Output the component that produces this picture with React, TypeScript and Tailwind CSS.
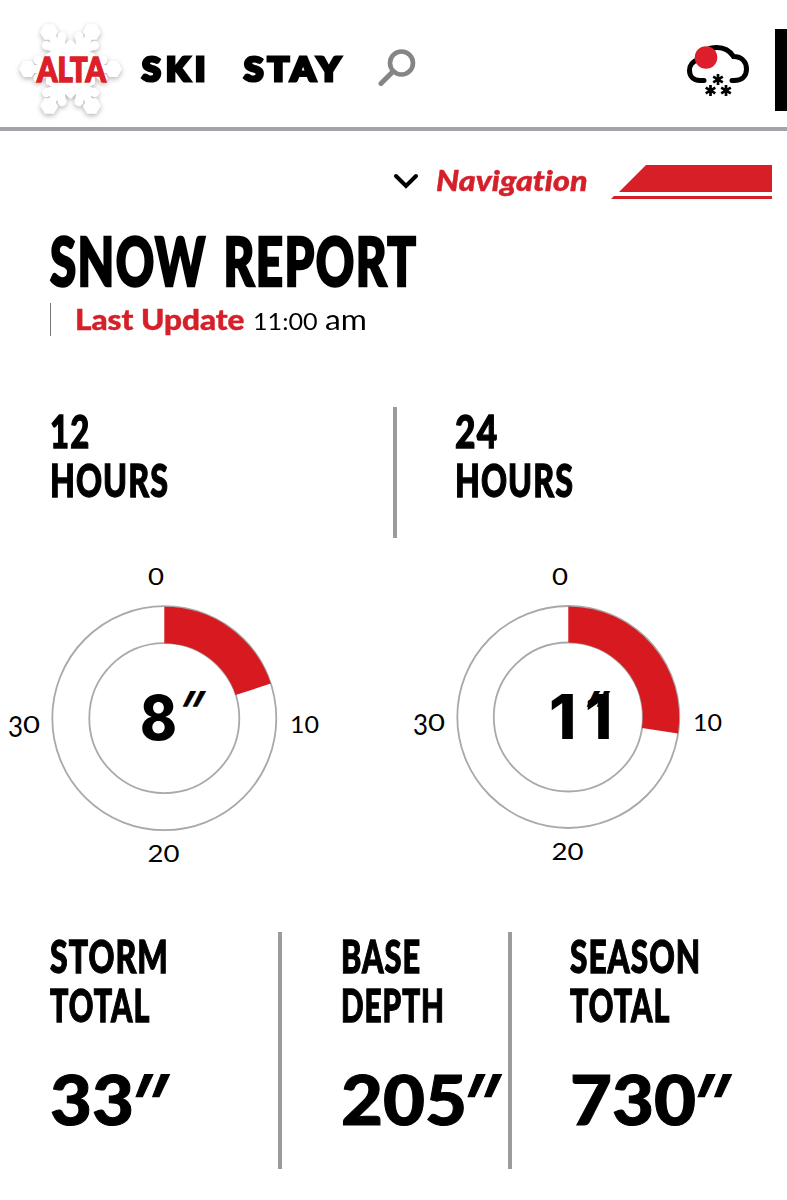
import { useLayoutEffect, useRef, useState } from "react";

type FitProps = { text: string; width: number; className?: string };

/* One line of display type, condensed or widened to a given width. */
function FitText({ text, width, className = "" }: FitProps) {
  const ref = useRef<HTMLSpanElement>(null);
  const [scale, setScale] = useState(1);
  useLayoutEffect(() => {
    if (ref.current) setScale(width / ref.current.offsetWidth);
  }, [width, text]);
  return (
    <span className="block" style={{ width }}>
      <span
        ref={ref}
        className={`inline-block origin-left whitespace-nowrap ${className}`}
        style={{ transform: `scaleX(${scale})` }}
      >
        {text}
      </span>
    </span>
  );
}

function Logo() {
  return (
    <svg viewBox="0 0 110 110" className="h-[110px] w-[110px] shrink-0 overflow-visible" aria-label="Alta">
      <g className="[filter:drop-shadow(0_2px_2.5px_rgba(0,0,0,0.28))]">
        <polygon points="55.5,25 63,32 80,40 80,70 63,78 55.5,85 48,78 31,70 31,40 48,32" fill="#fff" />
        {[0, 60, 120, 180, 240, 300].map((angle) => (
          <g key={angle} transform={`translate(55.5 55) rotate(${angle})`} fill="#fff" stroke="#fff">
            <path d="M0 0H40M21 0L32 -8.5M21 0L32 8.5" strokeWidth="8" fill="none" />
            <polygon points="51,0 46.8,7.5 38.7,7.5 34.5,0 38.7,-7.5 46.8,-7.5" strokeWidth="1" />
            <circle cx="32.5" cy="-9" r="4.6" strokeWidth="0" />
            <circle cx="32.5" cy="9" r="4.6" strokeWidth="0" />
          </g>
        ))}
      </g>
      <text
        x="22"
        y="67.5"
        textLength="69"
        lengthAdjust="spacingAndGlyphs"
        className="fill-[#dc1f2a] stroke-[#dc1f2a] font-['Lato',sans-serif] text-[34px] font-black"
        strokeWidth="1.6"
      >
        ALTA
      </text>
    </svg>
  );
}

function SearchIcon() {
  return (
    <svg viewBox="0 0 40 40" className="h-10 w-10 shrink-0" fill="none" stroke="#858585" strokeLinecap="round">
      <circle cx="23.5" cy="15" r="11.5" strokeWidth="4.6" />
      <path d="M15 23.5L3 35.5" strokeWidth="5" />
    </svg>
  );
}

function Flake({ x, y }: { x: number; y: number }) {
  return (
    <path
      transform={`translate(${x} ${y})`}
      d="M0 -5.5V5.5M-4.8 -2.8L4.8 2.8M-4.8 2.8L4.8 -2.8"
      stroke="#000"
      strokeWidth="2.7"
    />
  );
}

function WeatherIcon() {
  return (
    <svg viewBox="0 0 64 54" className="h-[54px] w-16 shrink-0" fill="none">
      <path
        d="M18 37.5H14C7 37.5 3.5 33 3.5 27.5C3.5 22 7 18 12 17C16 8 23 4.5 31 4.5C39 4.5 44 8 47.5 13.5C56 13.5 60.5 19 60.5 26C60.5 33 56 37.5 48 37.5H46"
        stroke="#000"
        strokeWidth="5"
        strokeLinecap="round"
      />
      <circle cx="20" cy="14.5" r="11.3" fill="#dc1f2a" />
      <Flake x={32} y={36.5} />
      <Flake x={24.5} y={47.5} />
      <Flake x={40} y={47.5} />
    </svg>
  );
}

const polar = (r: number, degrees: number) => {
  const a = (degrees * Math.PI) / 180;
  return `${r * Math.sin(a)} ${-r * Math.cos(a)}`;
};

const tick = "fill-black font-['Lato',sans-serif] text-[24px]";
const figure = "fill-black font-['Inter',sans-serif] font-extrabold text-[62px]";

type GaugeProps = { value: string; sweep: number; cy: number; outer: number; inner: number; right: number; bottom: number; left: number; side: number };

function Gauge({ value, sweep, cy, outer, inner, right, bottom, left, side }: GaugeProps) {
  return (
    <svg viewBox="-160 -160 320 320" className="h-80 w-80 overflow-visible">
      <g transform={`translate(0.3 ${cy})`}>
        <circle r={outer} fill="none" stroke="#a9a9a9" strokeWidth="1.8" />
        <circle r={inner} fill="none" stroke="#a9a9a9" strokeWidth="1.8" />
        <path
          d={`M0 ${-outer + 0.5}A${outer} ${outer} 0 0 1 ${polar(outer, sweep)}L${polar(inner, sweep)}A${inner} ${inner} 0 0 0 0 ${-inner}Z`}
          fill="#d71920"
        />
      </g>
      <text x="-16" y="-133.5" textLength="16" lengthAdjust="spacingAndGlyphs" className={tick}>0</text>
      <text x={right} y={side} textLength="29" lengthAdjust="spacingAndGlyphs" className={tick}>10</text>
      <text x="-16.5" y={bottom} textLength="32" lengthAdjust="spacingAndGlyphs" className={tick}>20</text>
      <text x={left} y={side + 4} textLength="15" lengthAdjust="spacingAndGlyphs" className="fill-black font-['Lato',sans-serif] text-[29px]">3</text>
      <text x={left + 15} y={side} textLength="17" lengthAdjust="spacingAndGlyphs" className={tick}>0</text>
      {value.length === 1 ? (
        <text x="-24" y="22" textLength="37" lengthAdjust="spacingAndGlyphs" className={figure}>{value}</text>
      ) : (
        <text y="21" className={figure}>
          {value.split("").map((digit, i) => (
            <tspan key={i} x={-19 + i * 36}>{digit}</tspan>
          ))}
        </text>
      )}
      <text
        transform="translate(8 10) skewX(-23)"
        textLength="20"
        lengthAdjust="spacingAndGlyphs"
        className="fill-black stroke-black font-['Inter',sans-serif] text-[50px] font-extrabold"
        strokeWidth="1.2"
      >
        ″
      </text>
    </svg>
  );
}

function Label({ lines }: { lines: [string, number][] }) {
  return (
    <h2 className="font-['Lato',sans-serif] text-[46px] leading-[49px] font-black">
      {lines.map(([text, width]) => (
        <FitText key={text} text={text} width={width} className="tracking-[1.5px] [-webkit-text-stroke:1.3px_#000]" />
      ))}
    </h2>
  );
}

function Total({ value, width }: { value: string; width: number }) {
  return (
    <p className="mt-[28px] flex font-['Lato',sans-serif] text-[69px] leading-[84px] font-black">
      <FitText text={value} width={width} className="[-webkit-text-stroke:1px_#000]" />
      <span className="pt-[3px] font-['Inter',sans-serif] text-[76px] font-extrabold [-webkit-text-stroke:1.5px_#000]">
        <span className="-ml-[3px] inline-block origin-left -skew-x-[23deg] scale-x-[0.74]">″</span>
      </span>
    </p>
  );
}

export default function App() {
  return (
    <div className="h-[1200px] w-[787px] overflow-hidden bg-white text-black">
      <header className="flex h-[131px] items-start border-b-4 border-[#a2a3a8]">
        <div className="pt-[14px] pl-[15px]">
          <Logo />
        </div>
        <nav className="flex pt-[48px] pl-[17px] font-['Lato',sans-serif] text-[32px] leading-[42px] font-black">
          <FitText text="SKI" width={69} className="tracking-[5px] [-webkit-text-stroke:3.2px_#000]" />
          <div className="pl-[33px]">
            <FitText text="STAY" width={101} className="tracking-[4px] [-webkit-text-stroke:3.2px_#000]" />
          </div>
        </nav>
        <div className="pt-[48px] pl-[33px]">
          <SearchIcon />
        </div>
        <div className="mt-[43px] ml-auto">
          <WeatherIcon />
        </div>
        <div className="mt-[29px] ml-[25px] h-[82px] w-[12px] shrink-0 bg-black" />
      </header>

      <div className="flex h-[90px] pt-[30px] pl-[392px]">
        <svg viewBox="0 0 28 20" className="mt-[10px] h-5 w-7" fill="none">
          <path d="M4 5L14 15L24 5" stroke="#000" strokeWidth="4" strokeLinecap="round" />
        </svg>
        <div className="pl-[16px] font-['Lato',sans-serif] text-[28px] leading-[38px] font-black text-[#d5202a] italic">
          <FitText text="Navigation" width={151} className="[-webkit-text-stroke:0.4px_#d5202a] [font-variant-ligatures:none]" />
        </div>
        <svg viewBox="0 0 161 36" className="mt-[3px] ml-[24px] h-9 w-[161px]" fill="#d61f27">
          <path d="M35 1H161V28H8Z" />
          <path d="M3 32H161V35H0Z" />
        </svg>
      </div>

      <section className="h-[186px] pl-[50px]">
        <h1 className="font-['Lato',sans-serif] text-[66px] leading-[80px] font-black">
          <FitText
            text="SNOW REPORT"
            width={367}
            className="tracking-[2px] [word-spacing:6px] [-webkit-text-stroke:2.5px_#000]"
          />
        </h1>
        <div className="mt-[2px] flex h-[33px] items-center border-l border-[#777] pl-[24px] font-['Lato',sans-serif] text-[28px] leading-[33px]">
          <FitText text="Last Update" width={170} className="font-black text-[#d5202a] [-webkit-text-stroke:0.4px_#d5202a]" />
          <div className="flex items-baseline pl-[8px]">
            <div className="text-[24px]"><FitText text="11:00" width={65} /></div>
            <div className="pl-[7px]"><FitText text="am" width={42} /></div>
          </div>
        </div>
      </section>

      <section className="flex h-[131px] pl-[50px]">
        <div className="-mt-[1px] w-[343px]">
          <Label lines={[["12", 40], ["HOURS", 119]]} />
        </div>
        <div className="h-[131px] w-1 bg-[#9b9b9b]" />
        <div className="-mt-[1px] pl-[58px]">
          <Label lines={[["24", 43], ["HOURS", 119]]} />
        </div>
      </section>

      <section className="flex h-[394px] gap-[84px] pt-[20px] pl-1">
        <Gauge value="8" sweep={72} cy={0.2} outer={112} inner={75} right={126} bottom={143.5} left={-156} side={14.5} />
        <Gauge value="11" sweep={98.5} cy={-1} outer={111} inner={74.5} right={125} bottom={141.5} left={-155} side={13} />
      </section>

      <section className="flex h-[237px] pl-[50px]">
        <div className="-mt-[1px] w-[228px]">
          <Label lines={[["STORM", 119], ["TOTAL", 100]]} />
          <Total value="33" width={84} />
        </div>
        <div className="h-[237px] w-1 bg-[#9b9b9b]" />
        <div className="-mt-[1px] w-[226px] pl-[59px]">
          <Label lines={[["BASE", 80], ["DEPTH", 104]]} />
          <Total value="205" width={126} />
        </div>
        <div className="h-[237px] w-1 bg-[#9b9b9b]" />
        <div className="-mt-[1px] pl-[58px]">
          <Label lines={[["SEASON", 131], ["TOTAL", 100]]} />
          <Total value="730" width={126} />
        </div>
      </section>
    </div>
  );
}
